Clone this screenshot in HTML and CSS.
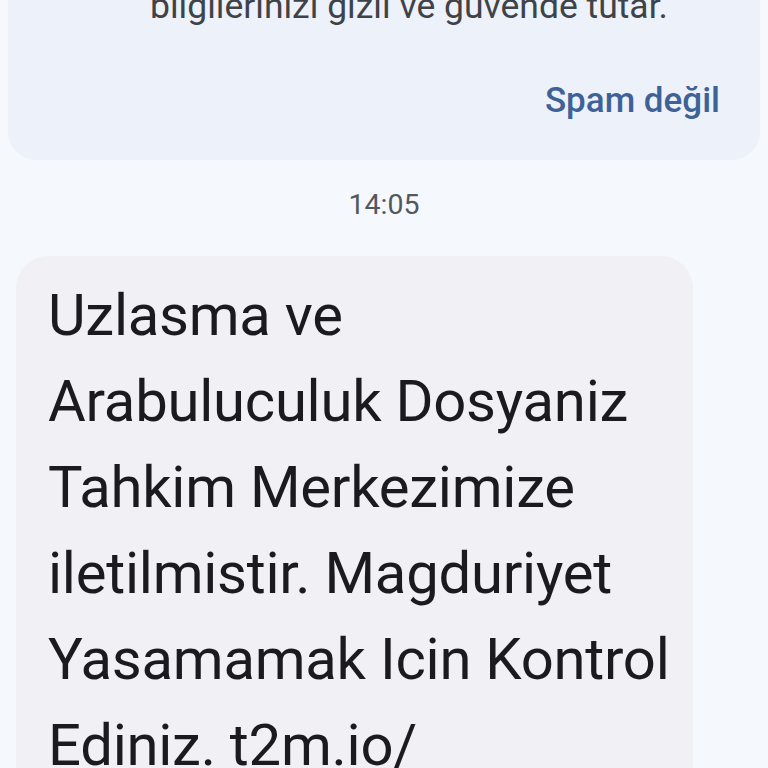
FILE: index.html
```html
<!DOCTYPE html>
<html lang="tr">
<head>
<meta charset="utf-8">
<link rel="stylesheet" href="styles.css">
</head>
<body>
<div class="screen">
  <div class="spam-card">
    <div class="spam-text">bilgilerinizi gizli ve güvende tutar.</div>
    <div class="spam-actions"><span class="spam-link">Spam değil</span></div>
  </div>
  <div class="timestamp">14:05</div>
  <div class="bubble">Uzlasma ve Arabuluculuk Dosyaniz Tahkim Merkezimize iletilmistir. Magduriyet Yasamamak Icin Kontrol Ediniz. t2m.io/</div>
</div>
</body>
</html>
```

FILE: styles.css
```css
html, body {
  margin: 0;
  padding: 0;
  background: #f5f9fd;
  font-family: Roboto, "Noto Sans", sans-serif;
}
.screen {
  width: 768px;
  height: 768px;
  overflow: hidden;
  display: flex;
  flex-direction: column;
}
.spam-card {
  margin: -18px 8px 0 8px;
  background: #edf1f9;
  border-radius: 0 0 28px 28px;
  padding: 0 0 35px 0;
  display: flex;
  flex-direction: column;
  gap: 47px;
}
.spam-text {
  padding-left: 142px;
  font-size: 35.5px;
  line-height: 48px;
  color: #3f4347;
}
.spam-actions {
  display: flex;
  justify-content: flex-end;
  padding-right: 40px;
}
.spam-link {
  font-size: 35px;
  line-height: 48px;
  font-weight: 500;
  color: #3e6297;
}
.timestamp {
  margin-top: 27px;
  text-align: center;
  font-size: 28.5px;
  line-height: 36px;
  color: #54585d;
}
.bubble {
  margin: 33px 0 0 16px;
  width: 677px;
  box-sizing: border-box;
  padding: 16px 8px 16px 32px;
  background: #f0f0f5;
  border-radius: 32px;
  font-size: 58px;
  letter-spacing: -0.25px;
  line-height: 86px;
  color: #1b1b1f;
}
```
